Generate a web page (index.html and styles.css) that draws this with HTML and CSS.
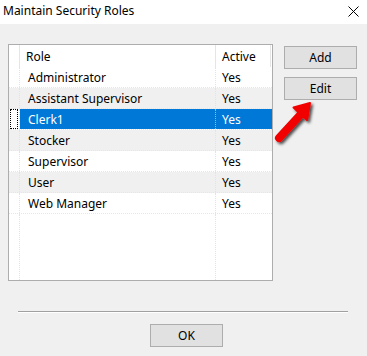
FILE: index.html
```html
<!DOCTYPE html>
<html lang="en">
<head>
    <meta charset="UTF-8">
    <title>Maintain Security Roles</title>
    <link rel="stylesheet" href="styles.css">
</head>
<body>
    <div class="dialog">
        <div class="titlebar">
            <span class="title">Maintain Security Roles</span>
            <svg class="close" width="11" height="11" viewBox="0 0 11 11">
                <path d="M0.5 0.5 L10.5 10.5 M10.5 0.5 L0.5 10.5" stroke="#000" stroke-width="1" fill="none"/>
            </svg>
        </div>

        <div class="content">
            <div class="main">
                <!-- Roles list -->
                <div class="listbox">
                    <div class="row header">
                        <div class="cell gutter"></div>
                        <div class="cell role">Role</div>
                        <div class="cell active">Active</div>
                    </div>
                    <div class="row">
                        <div class="cell gutter"></div>
                        <div class="cell role">Administrator</div>
                        <div class="cell active">Yes</div>
                    </div>
                    <div class="row alt">
                        <div class="cell gutter"></div>
                        <div class="cell role">Assistant Supervisor</div>
                        <div class="cell active">Yes</div>
                    </div>
                    <div class="row selected">
                        <div class="cell gutter"><span class="focus"></span></div>
                        <div class="cell role">Clerk1</div>
                        <div class="cell active">Yes</div>
                    </div>
                    <div class="row alt">
                        <div class="cell gutter"></div>
                        <div class="cell role">Stocker</div>
                        <div class="cell active">Yes</div>
                    </div>
                    <div class="row">
                        <div class="cell gutter"></div>
                        <div class="cell role">Supervisor</div>
                        <div class="cell active">Yes</div>
                    </div>
                    <div class="row alt">
                        <div class="cell gutter"></div>
                        <div class="cell role">User</div>
                        <div class="cell active">Yes</div>
                    </div>
                    <div class="row">
                        <div class="cell gutter"></div>
                        <div class="cell role">Web Manager</div>
                        <div class="cell active">Yes</div>
                    </div>
                    <div class="row filler">
                        <div class="cell gutter"></div>
                        <div class="cell role"></div>
                        <div class="cell active"></div>
                    </div>
                </div>

                <div class="side-buttons">
                    <button class="btn">Add</button>
                    <button class="btn">Edit</button>
                </div>
            </div>

            <div class="footer">
                <div class="separator"></div>
                <button class="btn ok">OK</button>
            </div>
        </div>

        <!-- Callout arrow pointing at Edit -->
        <svg class="arrow" width="56" height="56" viewBox="0 0 56 56">
            <defs>
                <filter id="shadow" x="-30%" y="-30%" width="160%" height="160%">
                    <feDropShadow dx="2" dy="2" stdDeviation="1.4" flood-color="#000" flood-opacity="0.7"/>
                </filter>
            </defs>
            <g filter="url(#shadow)" fill="#f20000" stroke="#f20000">
                <path d="M36 17 L13 42" stroke-width="8" stroke-linecap="round"/>
                <path d="M44 7 L27.5 11.5 L41 24 Z" stroke-width="2" stroke-linejoin="round"/>
            </g>
        </svg>
    </div>
</body>
</html>
```

FILE: styles.css
```css
/* General Styles */
body {
    margin: 0;
    padding: 0;
    background: #f0f0f0;
    font-family: "Segoe UI", "Noto Sans", Arial, sans-serif;
    font-size: 12px;
    color: #000;
}

.dialog {
    position: relative;
    width: 367px;
    height: 356px;
    overflow: hidden;
}

/* Title bar */
.titlebar {
    height: 24px;
    background: #fff;
    display: flex;
    align-items: center;
    justify-content: space-between;
    padding: 0 8px 0 3px;
}

.title {
    font-size: 12px;
    line-height: 1;
    margin-top: -2px;
}

.close {
    margin-top: -1px;
}

/* Main area */
.main {
    display: flex;
    align-items: flex-start;
    margin-top: 20px;
    padding-left: 8px;
}

.listbox {
    width: 263px;
    height: 235px;
    border: 1px solid #adadad;
    background: #fff;
    display: flex;
    flex-direction: column;
}

.row {
    display: grid;
    grid-template-columns: 11px 196px 56px;
    height: 20px;
    border-bottom: 1px dotted #e6e6e6;
}

.row.header {
    height: 22px;
    border-bottom: none;
}

.row.alt {
    background: #f0f0f0;
}

.row.filler {
    flex: 1;
    border-bottom: none;
}

.cell {
    display: flex;
    align-items: center;
    white-space: nowrap;
    overflow: hidden;
}

.cell.gutter,
.cell.role {
    border-right: 1px dotted #e3e3e3;
}

.cell.role {
    padding-left: 8px;
}

.cell.active {
    padding-left: 6px;
}

.header .cell.gutter,
.header .cell.role {
    border-right: 1px solid #e5e5e5;
}

.header .cell.role {
    padding-left: 6px;
}

.header .cell.active {
    border-right: 1px solid #e5e5e5;
    margin-right: 1px;
}

.selected .cell.role,
.selected .cell.active {
    background: #0078d7;
    color: #fff;
}

.selected .cell.role {
    border-right-color: #8cc0ec;
}

.selected .cell.gutter {
    background: #fff;
}

.focus {
    display: block;
    width: 6px;
    height: 18px;
    margin-left: 1px;
    border: 1px dotted #000;
}

/* Buttons */
.btn {
    width: 73px;
    height: 23px;
    padding: 0;
    border: 1px solid #adadad;
    background: #e1e1e1;
    font-family: inherit;
    font-size: 12px;
    color: #000;
}

.side-buttons {
    display: flex;
    flex-direction: column;
    gap: 8px;
    margin-left: 11px;
    margin-top: 2px;
}

/* Footer */
.footer {
    padding-top: 30px;
}

.separator {
    margin: 0 19px 0 18px;
    border-top: 1px solid #a0a0a0;
    border-bottom: 1px solid #fff;
}

.ok {
    margin: 11px 0 0 150px;
}

.arrow {
    position: absolute;
    left: 266px;
    top: 96px;
}
```
